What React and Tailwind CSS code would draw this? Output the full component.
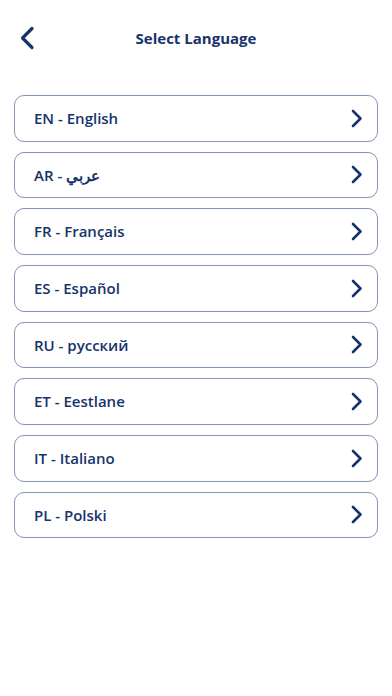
import React from "react";

const languages = [
  "EN - English",
  "AR - عربي",
  "FR - Français",
  "ES - Español",
  "RU - русский",
  "ET - Eestlane",
  "IT - Italiano",
  "PL - Polski",
];

function ChevronRight() {
  return (
    <svg width="12" height="19" viewBox="0 0 12 19" fill="none" className="shrink-0">
      <path d="M2 2l7.5 7.5L2 17" stroke="#17336b" strokeWidth="2.6" strokeLinecap="round" strokeLinejoin="round" />
    </svg>
  );
}

export default function App() {
  return (
    <div
      className="w-[392px] h-[696px] bg-white flex flex-col"
      style={{ fontFamily: '"Open Sans", "Noto Sans", sans-serif' }}
    >
      <div className="relative h-[76px] flex items-center justify-center">
        <button className="absolute left-[18px] top-[26px] w-[18px] h-[24px] flex items-center justify-center">
          <svg width="16" height="24" viewBox="0 0 16 24" fill="none">
            <path d="M13 2.5L3.5 12l9.5 9.5" stroke="#17336b" strokeWidth="3.2" strokeLinecap="round" strokeLinejoin="round" />
          </svg>
        </button>
        <h1 className="text-[15px] font-bold text-[#17336b] leading-none">Select Language</h1>
      </div>
      <div className="flex flex-col gap-[10px] px-[14px] pt-[19px]">
        {languages.map((l) => (
          <div
            key={l}
            className="h-[46.67px] border border-[#8494b4] rounded-[10px] flex items-center justify-between pl-[19px] pr-[14px]"
          >
            <span className="text-[15px] font-semibold text-[#17336b]">
              {l}
            </span>
            <ChevronRight />
          </div>
        ))}
      </div>
    </div>
  );
}
